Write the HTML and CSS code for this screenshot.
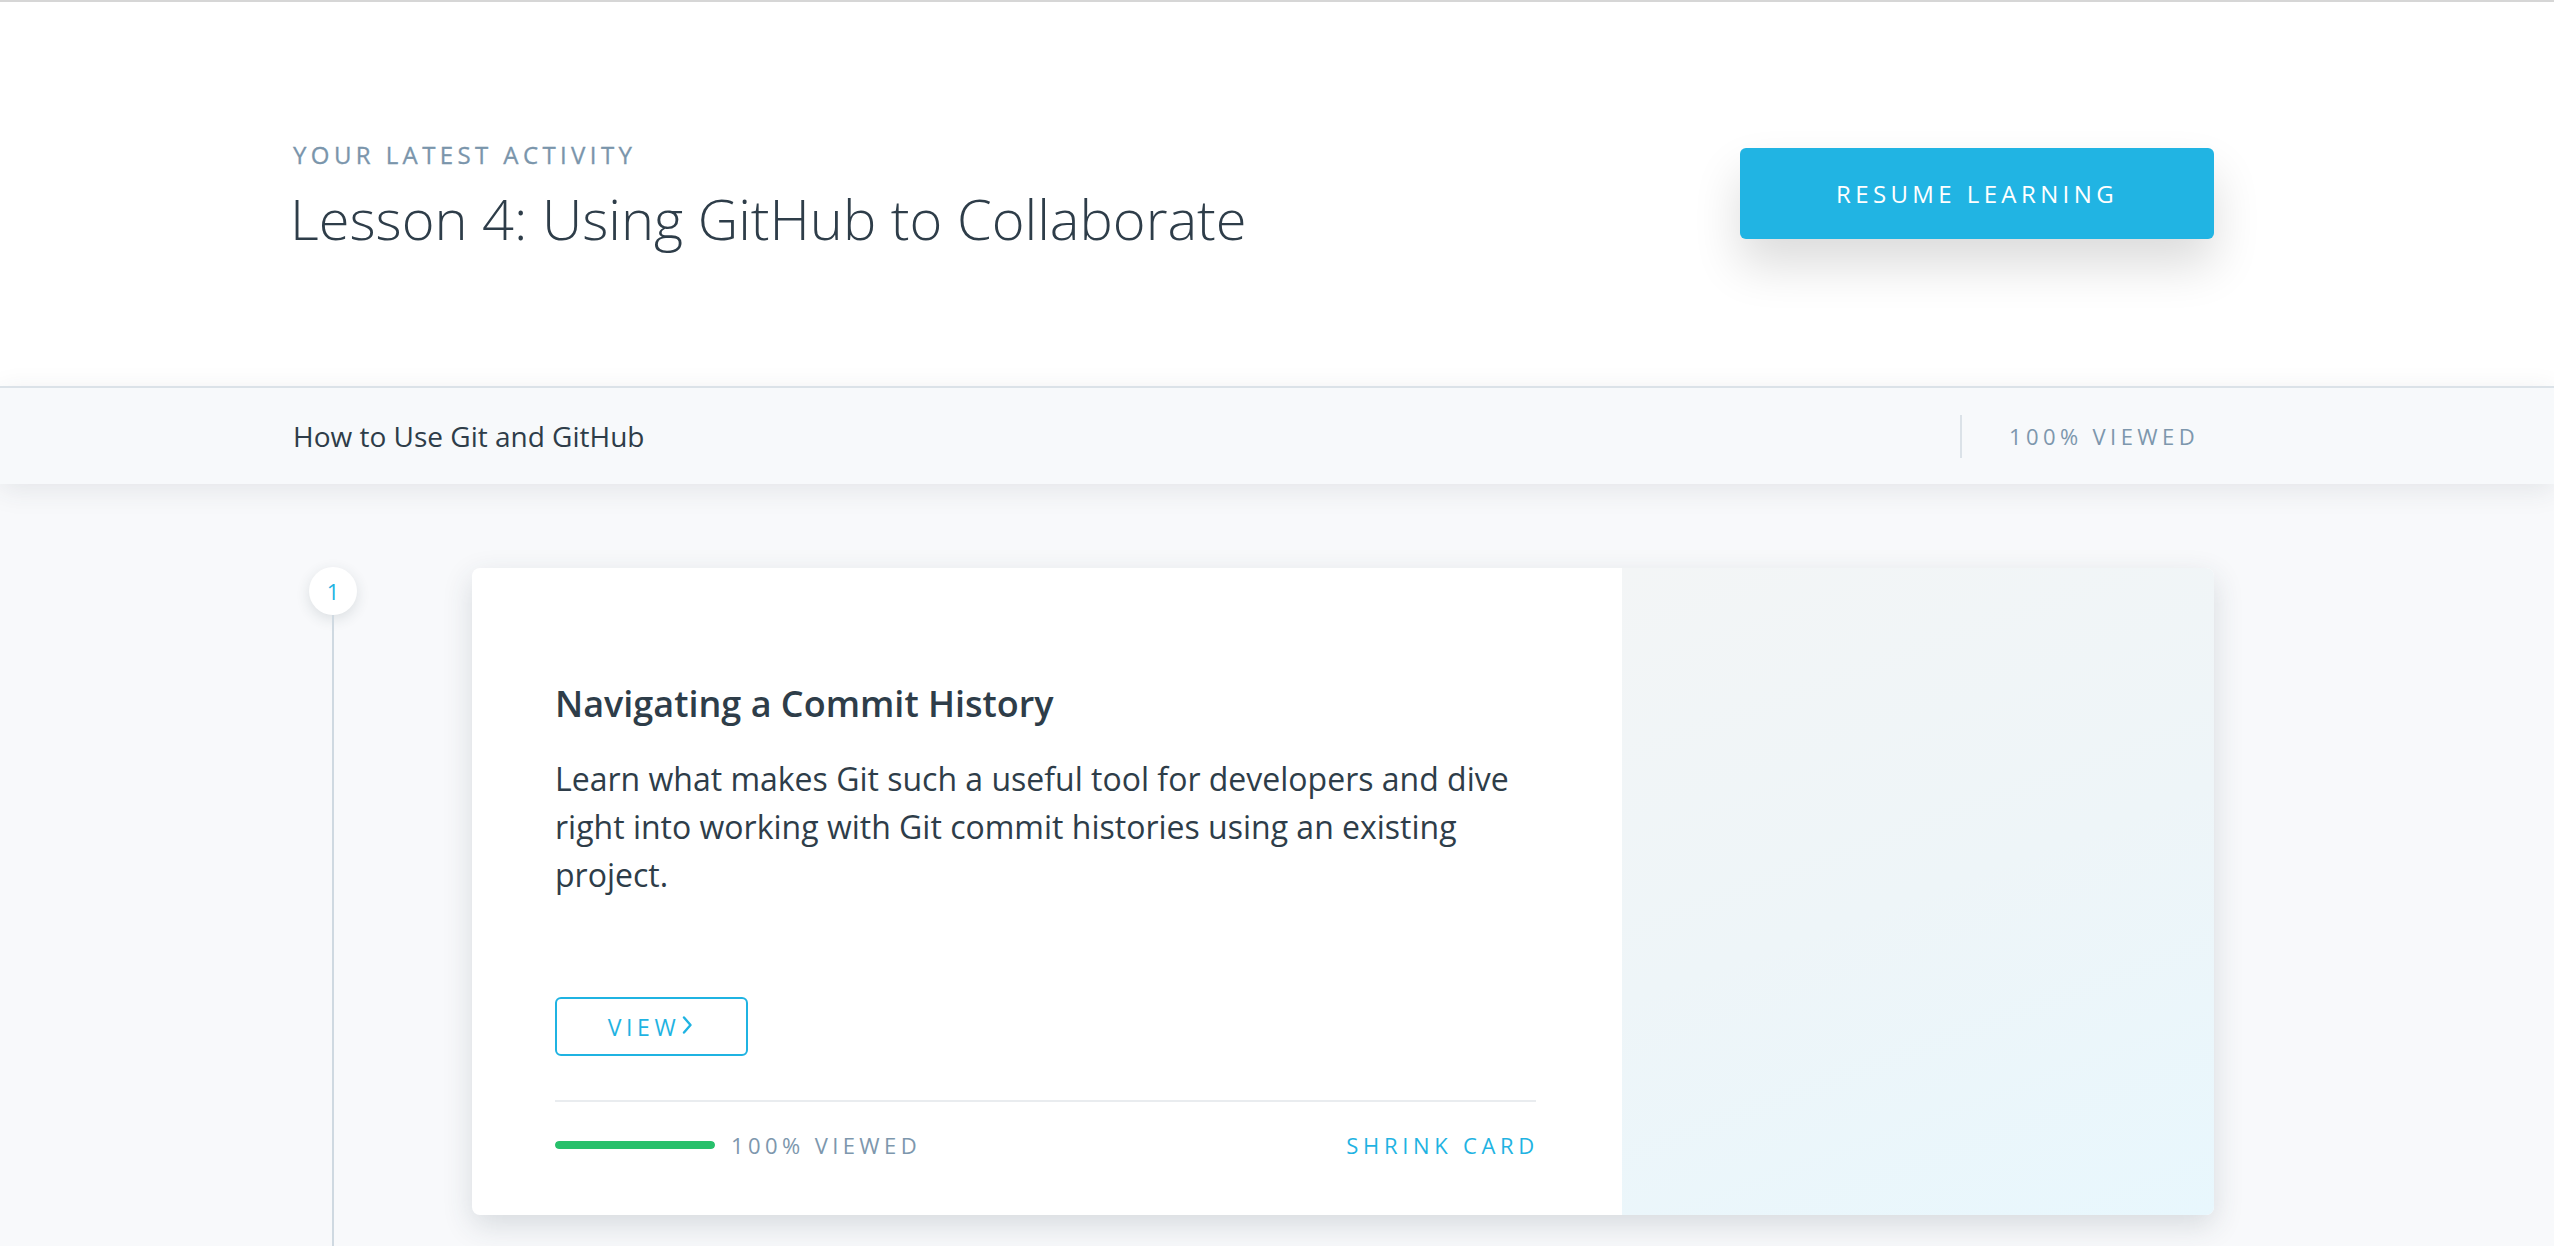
FILE: index.html
```html
<!DOCTYPE html>
<html lang="en">
<head>
<meta charset="utf-8">
<title>Latest Activity</title>
<link rel="stylesheet" href="styles.css">
</head>
<body>
  <header class="hero">
    <div class="hero-inner">
      <div class="hero-text">
        <div class="eyebrow">Your Latest Activity</div>
        <h1 class="hero-title">Lesson 4: Using GitHub to Collaborate</h1>
      </div>
      <a class="resume-btn" href="#">Resume Learning</a>
    </div>
  </header>

  <section class="course-bar">
    <div class="course-bar-inner">
      <div class="course-name">How to Use Git and GitHub</div>
      <div class="course-progress">
        <span class="vdivider"></span>
        <span class="meta-label">100% Viewed</span>
      </div>
    </div>
  </section>

  <main class="lessons">
    <div class="lesson-row">
      <div class="timeline">
        <div class="step">1</div>
        <div class="step-line"></div>
      </div>
      <article class="card">
        <div class="card-body">
          <h2 class="card-title">Navigating a Commit History</h2>
          <p class="card-desc">Learn what makes Git such a useful tool for developers and dive right into working with Git commit histories using an existing project.</p>
          <a class="view-btn" href="#">View<svg class="chev" viewBox="0 0 12 20" width="12" height="20"><path d="M3 2.5 L9.5 10 L3 17.5" fill="none" stroke="currentColor" stroke-width="2.4" stroke-linecap="round" stroke-linejoin="round"/></svg></a>
          <div class="card-foot">
            <div class="progress">
              <div class="progress-bar"><div class="progress-fill" style="width:100%"></div></div>
              <span class="meta-label">100% Viewed</span>
            </div>
            <a class="shrink" href="#">Shrink Card</a>
          </div>
        </div>
        <div class="card-art"></div>
      </article>
    </div>
  </main>
</body>
</html>
```

FILE: styles.css
```css
* { box-sizing: border-box; }

html, body {
  margin: 0;
  padding: 0;
}

body {
  font-family: "Open Sans", "Liberation Sans", sans-serif;
  background: #f8f9fb;
  color: #2e3d49;
  min-height: 1246px;
}

a { text-decoration: none; }

/* ---------- hero ---------- */
.hero {
  background: #ffffff;
  border-top: 2px solid #d6d6d6;
  height: 386px;
}

.hero-inner {
  width: 1921px;
  margin-left: 293px;
  padding-top: 137px;
  display: flex;
  justify-content: space-between;
  align-items: flex-start;
}

.eyebrow {
  font-size: 24px;
  line-height: 32px;
  letter-spacing: 4.4px;
  text-transform: uppercase;
  color: #7a95ab;
  -webkit-text-stroke: 0.3px #7a95ab;
}

.hero-title {
  margin: 14px 0 0 -3px;
  font-size: 56px;
  line-height: 67px;
  font-weight: 300;
  color: #2e3d49;
}

.resume-btn {
  margin-top: 9px;
  width: 474px;
  height: 91px;
  border-radius: 6px;
  background: #21b4e3;
  color: #ffffff;
  font-size: 24px;
  letter-spacing: 4.4px;
  text-transform: uppercase;
  display: flex;
  align-items: center;
  justify-content: center;
  box-shadow: 0 26px 48px rgba(0, 0, 0, 0.14);
}

/* ---------- course bar ---------- */
.course-bar {
  position: relative;
  z-index: 1;
  background: #f7f9fb;
  border-top: 2px solid #dbe2e8;
  height: 98px;
  box-shadow: 0 6px 26px rgba(46, 61, 73, 0.10);
}

.course-bar-inner {
  width: 1921px;
  margin-left: 293px;
  height: 96px;
  display: flex;
  align-items: center;
  justify-content: space-between;
}

.course-name {
  font-size: 28px;
  color: #2e3d49;
}

.course-progress {
  display: flex;
  align-items: center;
  gap: 47px;
  padding-right: 15px;
}

.vdivider {
  width: 2px;
  height: 43px;
  background: #dbe2e8;
}

.meta-label {
  font-size: 22px;
  letter-spacing: 4.4px;
  text-transform: uppercase;
  color: #7d97ad;
}

/* ---------- lessons ---------- */
.lessons {
  padding-top: 83px;
}

.lesson-row {
  display: flex;
  align-items: stretch;
  padding-left: 309px;
}

.timeline {
  width: 48px;
  display: flex;
  flex-direction: column;
  align-items: center;
}

.step {
  width: 48px;
  height: 48px;
  border-radius: 50%;
  background: #ffffff;
  box-shadow: 0 4px 14px rgba(46, 61, 73, 0.14);
  color: #1fb3e2;
  font-size: 22px;
  display: flex;
  align-items: center;
  justify-content: center;
  flex: none;
}

.step-line {
  width: 2px;
  flex: 1;
  background: #cfd9e1;
}

.card {
  margin-left: 115px;
  margin-top: 1px;
  margin-bottom: 31px;
  width: 1742px;
  height: 647px;
  display: flex;
  border-radius: 8px;
  overflow: hidden;
  background: #ffffff;
  box-shadow: 0 10px 30px rgba(46, 61, 73, 0.16);
}

.card-body {
  width: 1150px;
  padding: 114px 86px 0 83px;
  display: flex;
  flex-direction: column;
  align-items: flex-start;
}

.card-title {
  margin: 0;
  font-size: 36px;
  line-height: 43px;
  font-weight: 600;
  color: #2e3d49;
}

.card-desc {
  margin: 30px 0 0 0;
  font-size: 32px;
  line-height: 48px;
  color: #2e3d49;
}

.view-btn {
  margin-top: 98px;
  width: 193px;
  height: 59px;
  border: 2px solid #1fb3e2;
  border-radius: 6px;
  color: #1fb3e2;
  font-size: 23px;
  letter-spacing: 4.6px;
  text-transform: uppercase;
  display: flex;
  align-items: center;
  justify-content: center;
  gap: 1px;
  padding-right: 2px;
}

.chev {
  width: 12px;
  height: 20px;
  margin-top: -3px;
}

.card-foot {
  margin-top: 44px;
  width: 100%;
  border-top: 2px solid #e9ecef;
  padding-top: 28px;
  display: flex;
  justify-content: space-between;
  align-items: center;
}

.progress {
  display: flex;
  align-items: center;
  gap: 16px;
}

.progress-bar {
  width: 160px;
  height: 8px;
  border-radius: 4px;
  background: #e9ecef;
  overflow: hidden;
}

.progress-fill {
  height: 100%;
  border-radius: 4px;
  background: #27c06b;
}

.shrink {
  font-size: 22px;
  letter-spacing: 4.7px;
  text-transform: uppercase;
  color: #1fb3e2;
  margin-right: -3px;
}

.card-art {
  flex: 1;
  background: linear-gradient(160deg, #f3f5f6 0%, #eef5f8 50%, #e8f7fd 100%);
}
```
